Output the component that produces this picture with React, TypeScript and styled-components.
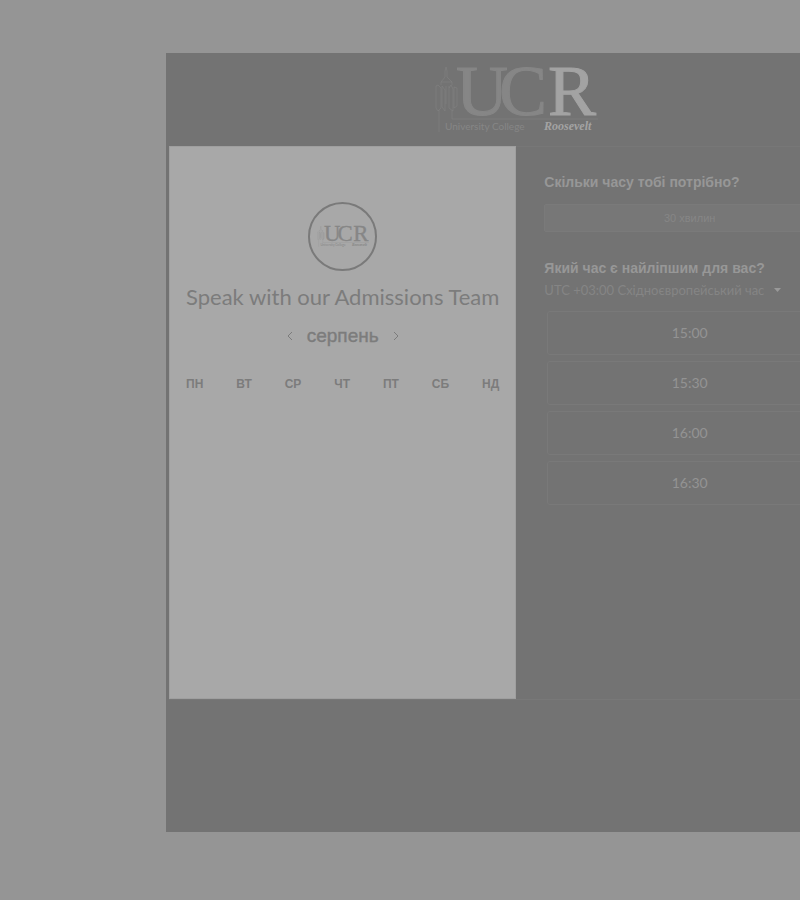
import React from 'react';
import styled, { createGlobalStyle } from 'styled-components';

const GlobalStyle = createGlobalStyle`
  *, *::before, *::after { box-sizing: border-box; }
  html, body { margin: 0; background: #959595; overflow-x: hidden; }
  button, select { font: inherit; color: inherit; margin: 0; }
`;

const Page = styled.div`
  min-height: 100vh;
  padding: 53px 0 68px 166px;
  overflow: hidden;
  font-family: "Liberation Sans", Arial, sans-serif;
`;

const Scheduler = styled.main`
  margin-right: -66px;
  min-height: 779px;
  background: #737373;
`;

const Header = styled.header`
  display: flex;
  justify-content: center;
  padding: 11px 0 10px;
`;

const Body = styled.div`
  display: grid;
  grid-template-columns: 1fr 1fr;
  min-height: 554px;
  margin: 0 3px;
  border-bottom: 1px solid #787878;
`;

const CalendarPanel = styled.section`
  display: flex;
  flex-direction: column;
  align-items: center;
  padding: 55px 16px;
  background: #a8a8a8;
  border: 1px solid #9f9f9f;
  color: #7c7c7c;
`;

const Avatar = styled.div`
  display: flex;
  align-items: center;
  justify-content: center;
  width: 69px;
  height: 69px;
  border: 2px solid #7a7a7a;
  border-radius: 50%;
`;

const Title = styled.h1`
  margin: 12px 0 0;
  font: 400 22px/28px Lato, sans-serif;
  white-space: nowrap;
`;

const MonthBar = styled.div`
  display: flex;
  align-items: center;
  gap: 14px;
  margin-top: 11px;
`;

const Month = styled.h2`
  margin: 0;
  font-size: 19px;
  line-height: 28px;
  font-weight: 400;
  -webkit-text-stroke: 0.4px currentColor;
`;

const ArrowButton = styled.button`
  display: flex;
  padding: 4px 0;
  border: 0;
  background: none;
`;

const Weekdays = styled.table`
  width: 100%;
  margin-top: 25px;
  border-collapse: collapse;
  font-size: 12px;
  line-height: 18px;

  thead tr { display: flex; justify-content: space-between; }
  th { padding: 0; }
`;

const TimesPanel = styled.section`
  padding: 27px 28px;
  border-top: 1px solid #777777;
  color: #979797;
`;

const Question = styled.h2`
  margin: 0;
  font-size: 14px;
  line-height: 16px;
  font-weight: 700;
`;

const DurationButton = styled.button`
  display: block;
  width: 100%;
  height: 28px;
  margin: 14px 0 28px;
  padding: 0;
  background: #777777;
  border: 1px solid #7a7a7a;
  border-radius: 2px;
  color: #868686;
  font-size: 11px;
`;

const ZoneLabel = styled.label`
  display: inline-flex;
  align-items: center;
  gap: 10px;
  margin: 5px 0 12px;
  color: #858585;
`;

const ZoneSelect = styled.select`
  appearance: none;
  height: 18px;
  padding: 0;
  border: 0;
  background: transparent;
  font: 400 13px/18px Lato, "Liberation Sans", sans-serif;
`;

const Slots = styled.ul`
  display: grid;
  gap: 6px;
  margin: 0;
  padding: 0 3px;
  list-style: none;
`;

const SlotButton = styled.button`
  width: 100%;
  height: 44px;
  padding: 0;
  background: transparent;
  border: 1px solid #797979;
  border-radius: 3px;
  color: #939393;
  font: 400 14px/20px Lato, sans-serif;
`;

type LogoProps = { width: number; height: number; ink: string; accent: string; label: string };

function Logo({ width, height, ink, accent, label }: LogoProps) {
  return (
    <svg width={width} height={height} viewBox="0 0 164 72" role="img" aria-label={label}>
      <g fill="none" stroke={ink} strokeWidth="1" opacity="0.5">
        <path d="M5 68V46M2 22v22l2 3 3-3V24l-3-3zM8 22v21l3 4V26zM12 22v18M15 22v22l4 3V25l-2-4-2 3M20 23v21l3-2V24zM7 21v-3l4-5V7l1-4 1 4v6l5 5v3M7 18h11M18 46v9" />
      </g>
      <path d="M18 55h146" stroke={ink} opacity="0.5" />
      <g fontFamily="Liberation Serif, serif" fontSize="72">
        <text x="22" y="51" fill={ink} stroke={ink} strokeWidth="1">U</text>
        <text x="65" y="51" fill={ink} stroke={ink} strokeWidth="1">C</text>
        <text x="114" y="51" fill={accent} stroke={accent} strokeWidth="1">R</text>
      </g>
      <text x="11" y="66" fill={ink} fontFamily="Lato, sans-serif" fontSize="10">University College</text>
      <text x="110" y="66" fill={accent} fontFamily="Liberation Serif, serif" fontWeight="700" fontStyle="italic" fontSize="12">Roosevelt</text>
    </svg>
  );
}

function Chevron({ d }: { d: string }) {
  return (
    <svg width="6" height="10" viewBox="0 0 6 10" fill="none" stroke="currentColor" aria-hidden="true">
      <path d={d} />
    </svg>
  );
}

const days = ['ПН', 'ВТ', 'СР', 'ЧТ', 'ПТ', 'СБ', 'НД'];
const times = ['15:00', '15:30', '16:00', '16:30'];

export default function App() {
  return (
    <Page>
      <GlobalStyle />
      <Scheduler>
        <Header>
          <Logo width={164} height={72} ink="#868686" accent="#a3a3a3" label="University College Roosevelt" />
        </Header>
        <Body>
          <CalendarPanel>
            <Avatar>
              <Logo width={52} height={23} ink="#868686" accent="#868686" label="UCR" />
            </Avatar>
            <Title>Speak with our Admissions Team</Title>
            <MonthBar>
              <ArrowButton aria-label="Попередній місяць"><Chevron d="M5 1 1 5l4 4" /></ArrowButton>
              <Month>серпень</Month>
              <ArrowButton aria-label="Наступний місяць"><Chevron d="m1 1 4 4-4 4" /></ArrowButton>
            </MonthBar>
            <Weekdays>
              <thead>
                <tr>{days.map((day) => <th key={day} scope="col">{day}</th>)}</tr>
              </thead>
            </Weekdays>
          </CalendarPanel>
          <TimesPanel>
            <Question>Скільки часу тобі потрібно?</Question>
            <DurationButton>30 хвилин</DurationButton>
            <Question>Який час є найліпшим для вас?</Question>
            <ZoneLabel>
              <ZoneSelect aria-label="Часовий пояс">
                <option>UTC +03:00 Східноєвропейський час</option>
              </ZoneSelect>
              <svg width="7" height="4" viewBox="0 0 7 4" aria-hidden="true"><path d="M0 0h7L3.5 4z" fill="#999999" /></svg>
            </ZoneLabel>
            <Slots>
              {times.map((time) => <li key={time}><SlotButton>{time}</SlotButton></li>)}
            </Slots>
          </TimesPanel>
        </Body>
      </Scheduler>
    </Page>
  );
}
